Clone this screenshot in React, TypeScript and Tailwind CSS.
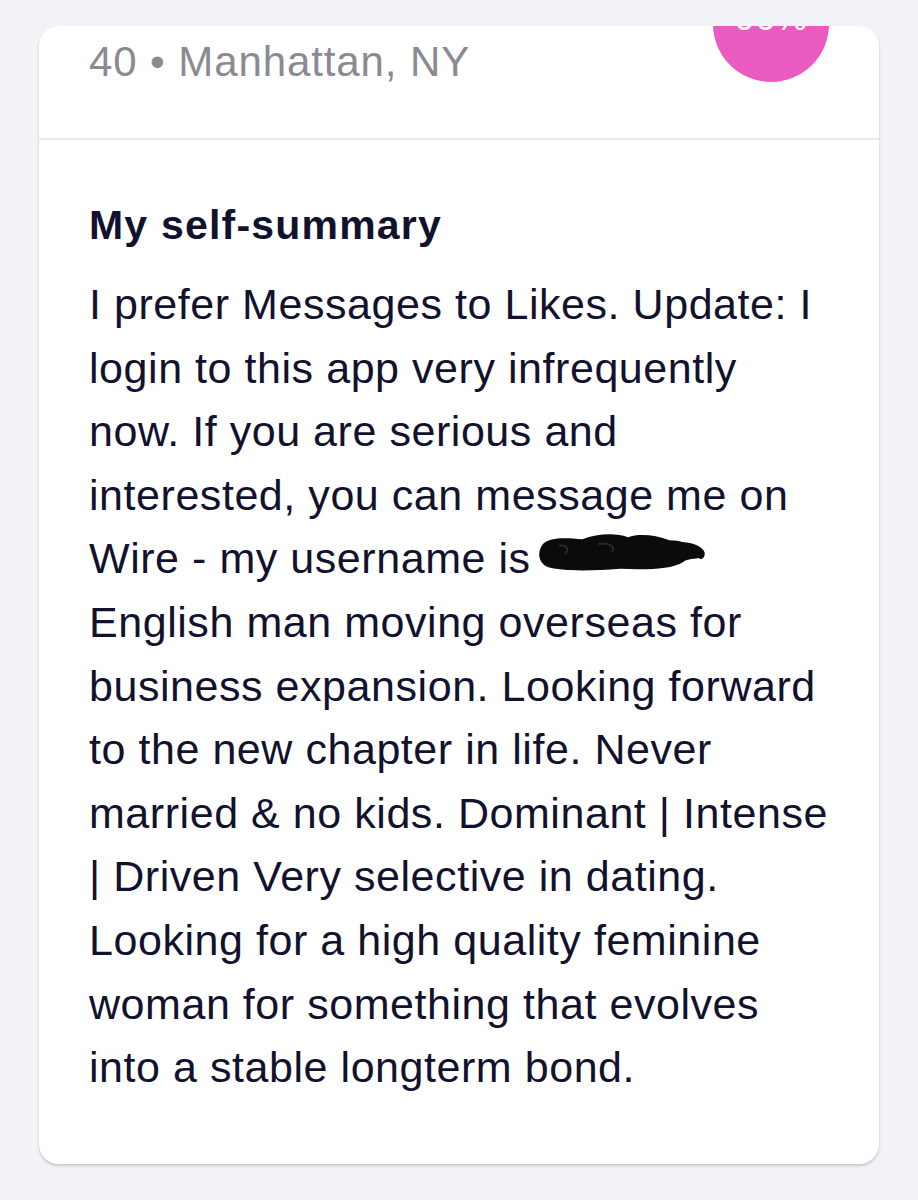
import React from 'react';

const lines = [
  'I prefer Messages to Likes. Update: I',
  'login to this app very infrequently',
  'now. If you are serious and',
  'interested, you can message me on',
  '__WIRE__',
  'English man moving overseas for',
  'business expansion. Looking forward',
  'to the new chapter in life. Never',
  'married & no kids. Dominant | Intense',
  '| Driven Very selective in dating.',
  'Looking for a high quality feminine',
  'woman for something that evolves',
  'into a stable longterm bond.',
];

// hand-drawn blackout over the username
function Scribble() {
  return (
    <svg width="170" height="42" viewBox="0 0 172 40" className="-ml-[6px] inline-block align-baseline">
      <path
        d="M6 12 C14 4 30 6 46 7 C60 2 78 0 92 5 C104 1 120 3 134 8 C146 8 152 11 156 15 C166 14 172 20 166 25 C160 28 152 26 148 30 C136 38 108 38 84 37 C56 39 26 40 10 35 C1 30 0 20 6 12 Z"
        fill="#0b0b0b"
      />
      <path d="M140 13 C156 12 170 18 166 24" stroke="#0b0b0b" strokeWidth="6" fill="none" strokeLinecap="round" />
      <path d="M22 14 C30 12 34 18 28 22" stroke="#2a2a2a" strokeWidth="2" fill="none" />
      <path d="M62 12 C72 10 80 14 76 20" stroke="#2a2a2a" strokeWidth="2" fill="none" />
    </svg>
  );
}

export default function App() {
  return (
    <div className="min-h-[1200px] w-[918px] bg-[#f2f3f7] pt-[26px] px-[39px]" style={{ fontFamily: '"Liberation Sans", Arial, sans-serif' }}>
      <div className="relative overflow-hidden rounded-[20px] bg-white shadow-[0_2px_3px_rgba(0,0,0,0.18)]">
        <div className="relative h-[114px] border-b-2 border-[#e8e9ee]">
          <div className="pl-[50px] pt-[12px] text-[42px] leading-[48px] tracking-[0.9px] text-[#8a8a93]">40 • Manhattan, NY</div>
          <div className="absolute left-[674px] top-[-60px] flex h-[116px] w-[116px] items-end justify-center rounded-full bg-[#ea5bc1] pb-[46px] text-[36px] leading-none text-white">
            96%
          </div>
        </div>
        <div className="pl-[50px] pt-[62px] pb-[64px] text-[#12122e]">
          <div className="text-[41px] font-bold leading-[46px] tracking-[1.2px]">My self-summary</div>
          <div className="mt-[25px] text-[43px] leading-[63.6px] tracking-[0.55px]">
            {lines.map((l, i) =>
              l === '__WIRE__' ? (
                <div key={i} className="whitespace-nowrap">
                  Wire - my username is <Scribble />
                </div>
              ) : (
                <div key={i} className="whitespace-nowrap">
                  {l}
                </div>
              )
            )}
          </div>
        </div>
      </div>
    </div>
  );
}
